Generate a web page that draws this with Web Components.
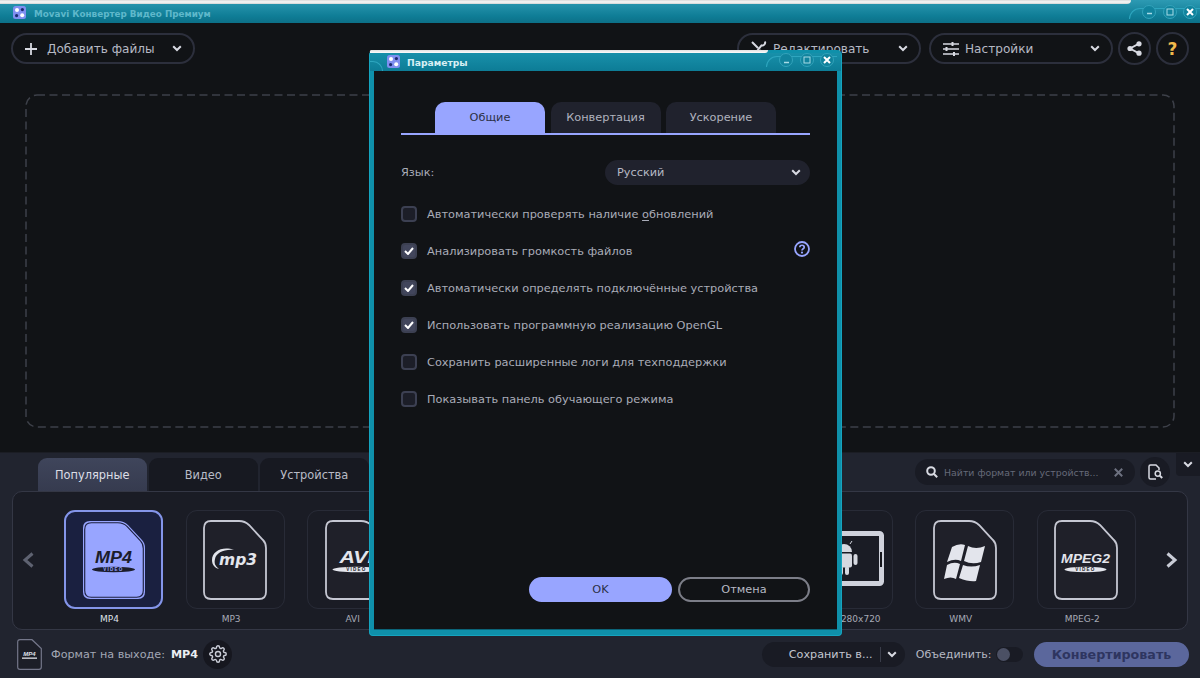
<!DOCTYPE html>
<html lang="ru">
<head>
<meta charset="utf-8">
<title>Movavi Конвертер Видео Премиум</title>
<style>
    html, body { margin: 0; height: 678px; overflow: hidden; background: #111316; }
    body { font-family: "DejaVu Sans", sans-serif; }
</style>
</head>
<body>
<app-shell></app-shell>
<script>
const ICONS = {
    chevron: `<svg width="10" height="7" viewBox="0 0 10 7"><path d="M1.2 1.2 5 5l3.8-3.8" fill="none" stroke="currentColor" stroke-width="2"/></svg>`,
    plus: `<svg width="12" height="12" viewBox="0 0 12 12"><path d="M6 0v12M0 6h12" stroke="#d8dae2" stroke-width="1.800"/></svg>`,
    tools: `<svg width="16" height="16" viewBox="0 0 16 16" fill="none" stroke="#d8dae2" stroke-width="2"><path d="M1 1l6 6M14 .5c.8 2.500-1.500 4.500-3.500 4L3 14M9 9l4 5"/></svg>`,
    sliders: `<svg width="16" height="14" viewBox="0 0 16 14" stroke="#d8dae2" stroke-width="1.600"><path d="M0 2h16M0 7h16M0 12h16"/><path d="M9.500 0v4M3.500 5v4M11 10v4" stroke-width="2"/></svg>`,
    share: `<svg width="15" height="15" viewBox="0 0 15 15"><path d="M12 2.600 3 7.500l9 4.900" fill="none" stroke="#d8dae2" stroke-width="1.800"/><circle cx="12" cy="2.800" r="2.600" fill="#d8dae2"/><circle cx="3" cy="7.500" r="2.600" fill="#d8dae2"/><circle cx="12" cy="12.200" r="2.600" fill="#d8dae2"/></svg>`,
    search: `<svg width="12" height="12" viewBox="0 0 12 12" fill="none" stroke="#d8dae2" stroke-width="2"><circle cx="5" cy="5" r="3.800"/><path d="m8 8 3.200 3.200"/></svg>`,
    close: `<svg width="9" height="9" viewBox="0 0 9 9"><path d="m.8.8 7.400 7.400M8.200.8.8 8.200" stroke="#6d7180" stroke-width="2"/></svg>`,
    docSearch: `<svg width="15" height="16" viewBox="0 0 15 16" fill="none" stroke="#d8dae2" stroke-width="1.500"><path d="M8 15H2.500Q1 15 1 13.500V2.500Q1 1 2.500 1H8l3 3v2"/><circle cx="9.800" cy="9.600" r="2.600"/><path d="m11.800 11.600 2.400 2.400" stroke-width="2"/></svg>`,
    gear: `<svg width="18" height="18" viewBox="0 0 24 24" fill="none" stroke="#c9ccd6" stroke-width="1.900"><circle cx="12" cy="12" r="3.400"/><path d="M19.400 15a1.650 1.650 0 0 0 .33 1.820l.06.06a2 2 0 0 1 0 2.830 2 2 0 0 1-2.830 0l-.06-.06a1.650 1.650 0 0 0-1.820-.33 1.650 1.650 0 0 0-1 1.510V21a2 2 0 0 1-2 2 2 2 0 0 1-2-2v-.09A1.650 1.650 0 0 0 9 19.400a1.650 1.650 0 0 0-1.820.33l-.06.06a2 2 0 0 1-2.830 0 2 2 0 0 1 0-2.830l.06-.06a1.650 1.650 0 0 0 .33-1.820 1.650 1.650 0 0 0-1.510-1H3a2 2 0 0 1-2-2 2 2 0 0 1 2-2h.09A1.650 1.650 0 0 0 4.600 9a1.650 1.650 0 0 0-.33-1.820l-.06-.06a2 2 0 0 1 0-2.830 2 2 0 0 1 2.830 0l.06.06a1.650 1.650 0 0 0 1.820.33H9a1.650 1.650 0 0 0 1-1.510V3a2 2 0 0 1 2-2 2 2 0 0 1 2 2v.09a1.650 1.650 0 0 0 1 1.510 1.650 1.650 0 0 0 1.820-.33l.06-.06a2 2 0 0 1 2.830 0 2 2 0 0 1 0 2.830l-.06.06a1.650 1.650 0 0 0-.33 1.820V9a1.650 1.650 0 0 0 1.510 1H21a2 2 0 0 1 2 2 2 2 0 0 1-2 2h-.09a1.650 1.650 0 0 0-1.510 1z"/></svg>`,
    appLogo: `<svg width="13" height="13" viewBox="0 0 13 13"><rect width="13" height="13" rx="2.500" fill="#7f8ff0"/><circle cx="4" cy="4" r="2" fill="#fff"/><circle cx="9.200" cy="9.200" r="2" fill="#fff"/><circle cx="3.600" cy="9.600" r="1.600" fill="#1c2a70"/><circle cx="9.400" cy="3.600" r="1.600" fill="#1c2a70"/></svg>`,
    help: `<svg width="16" height="16" viewBox="0 0 16 16"><circle cx="8" cy="8" r="7" fill="none" stroke="#98a5ff" stroke-width="1.800"/><path d="M5.800 6.200C5.800 3.600 10.200 3.600 10.200 6.200 10.200 7.800 8 7.800 8 9.600" fill="none" stroke="#98a5ff" stroke-width="1.700"/><circle cx="8" cy="11.600" r="1.100" fill="#98a5ff"/></svg>`,
    arrowLeft: `<svg width="13" height="16" viewBox="0 0 13 16"><path d="M10.500 1.500 3 8l7.500 6.500" fill="none" stroke="currentColor" stroke-width="3"/></svg>`,
    arrowRight: `<svg width="13" height="16" viewBox="0 0 13 16"><path d="M2.500 1.500 10 8l-7.500 6.500" fill="none" stroke="currentColor" stroke-width="3"/></svg>`,
};

function videoLogo(title, size, length, dark, pillW) {
    const ink = dark ? "#1b1d2c" : "#e3e5ec";
    const tiny = dark ? "#98a5ff" : "#1d1e28";
    return `<svg viewBox="0 0 64 80" width="64" height="80" style="position:absolute;left:0;top:0">
        <text x="31.500" y="42.500" text-anchor="middle" textLength="${length}" lengthAdjust="spacingAndGlyphs" font-family="Liberation Sans, sans-serif" font-weight="700" font-style="italic" font-size="${size}" fill="${ink}">${title}</text>
        <ellipse cx="31.500" cy="49.500" rx="${pillW}" ry="2.800" fill="${ink}"/>
        <text x="31.500" y="51.200" text-anchor="middle" font-family="Liberation Sans, sans-serif" font-weight="700" font-size="4.600" letter-spacing="1.200" fill="${tiny}">VIDEO</text>
    </svg>`;
}
const LOGOS = {
    mp3: `<svg viewBox="0 0 64 80" width="64" height="80" style="position:absolute;left:0;top:0">
        <path d="M31 30C20 26 9 31 9 40 9 45 12 48 16 49 12 46 11 43 12 39 13 33 21 29 31 30Z" fill="#e3e5ec"/>
        <text x="35" y="45" text-anchor="middle" textLength="38" lengthAdjust="spacingAndGlyphs" font-family="DejaVu Sans, sans-serif" font-weight="700" font-style="italic" font-size="15" fill="#e3e5ec">mp3</text>
    </svg>`,
    windows: `<svg viewBox="0 0 64 80" width="64" height="80" style="position:absolute;left:0;top:0" fill="#e3e5ec">
        <path d="M19 27Q26 23 32 25L28 41Q22 38 14 42Z"/><path d="M35 26Q43 30 52 26L48 42Q39 45 31 41Z"/>
        <path d="M14 45Q21 41 27 44L23 59Q18 56 11 59Z"/><path d="M30 45Q38 48 47 45L43 61Q36 62 26 58Z"/>
    </svg>`,
    tablet: `<svg viewBox="0 0 84 60" width="84" height="60" style="position:absolute;left:-8px;top:11px">
        <rect x="2.500" y="2.500" width="76" height="50" rx="2" fill="none" stroke="#cfd2dc" stroke-width="5"/>
        <rect x="77" y="21" width="2" height="15" fill="#15161c"/>
        <g fill="#d5d8e0" transform="translate(0 -2)"><path d="M33 23a8 8 0 0 1 16 0z"/><path d="m35 15-2-3M47 15l2-3" stroke="#d5d8e0"/><rect x="33" y="24.500" width="16" height="14" rx="2"/><rect x="27.500" y="25" width="4" height="11" rx="2"/><rect x="50.500" y="25" width="4" height="11" rx="2"/><rect x="36" y="37" width="4" height="9" rx="2"/><rect x="42" y="37" width="4" height="9" rx="2"/></g>
    </svg>`,
};

class TitleBar extends HTMLElement {
    constructor() {
        super();
        const root = this.attachShadow({mode: 'open'});
        root.innerHTML = `
        <style>
            :host { display: block; height: 23px; flex: none; position: relative; background: linear-gradient(#2d9ab3, #0f7d96 70%, #0c7088); color: #5fb8cb; font: 700 8.800px "DejaVu Sans", sans-serif; }
            .strip { height: 4px; margin-right: 69px; background: linear-gradient(#d8d8d8, #f8f8f8 50%, #d0d4d4); border-radius: 0 0 10px 0; }
            .row { display: flex; align-items: center; gap: 8px; height: 19px; padding-left: 13px; }
            .right { margin-left: auto; margin-right: 3px; margin-top: -4px; }
        </style>
        <div class="strip"></div>
        <div class="row"><span>${ICONS.appLogo}</span><span>Movavi Конвертер Видео Премиум</span><win-buttons class="right"></win-buttons></div>`;
    }
}

class WinButtons extends HTMLElement {
    constructor() {
        super();
        const root = this.attachShadow({mode: 'open'});
        root.innerHTML = `
        <style>
            :host { display: flex; gap: 6.500px; position: relative; }
            :host::before { content: ""; position: absolute; left: -13px; right: -3px; top: 3px; height: 10px; border-top: 1px solid #2ea6bf; border-left: 1px solid #2ea6bf; border-top-left-radius: 11px; }
            span { position: relative; box-sizing: border-box; width: 14px; height: 14px; border-radius: 50%; border: 1px solid #33a3bb; background: #11839d; display: grid; place-items: center; color: #a8dbe6; }
            svg { display: block; }
        </style>
        <span><svg width="7" height="7" viewBox="0 0 7 7"><path d="M1 5.500h5" stroke="currentColor" stroke-width="1.500"/></svg></span>
        <span><svg width="8" height="8" viewBox="0 0 8 8"><rect x="1" y="1" width="6" height="6" fill="none" stroke="currentColor"/></svg></span>
        <span><svg width="8" height="8" viewBox="0 0 8 8"><path d="m1 1 6 6M7 1 1 7" stroke="#fff" stroke-width="2"/></svg></span>`;
    }
}

class ToolButton extends HTMLElement {
    constructor() {
        super();
        const root = this.attachShadow({mode: 'open'});
        root.innerHTML = `
        <style>
            :host { display: flex; align-items: center; box-sizing: border-box; height: 31px; border: 2px solid #2c2f3c; border-radius: 16px; padding: 0 11px 0 12px; color: #b6b9c4; font-size: 12.100px; width: 184px; }
            .icon { display: flex; width: 22px; }
            .chev { margin-left: auto; display: flex; color: #d8dae2; }
        </style>
        <span class="icon">${ICONS[this.getAttribute("icon")]}</span><slot></slot><span class="chev">${ICONS.chevron}</span>`;
    }
}

class RoundButton extends HTMLElement {
    constructor() {
        super();
        const root = this.attachShadow({mode: 'open'});
        root.innerHTML = `
        <style>
            :host { display: grid; place-items: center; box-sizing: border-box; width: 33px; height: 33px; margin: -1px 0 0 -3px; border: 2px solid #2c2f3c; border-radius: 50%; color: #f0b94c; font: 700 17px "DejaVu Sans", sans-serif; }
        </style>
        <slot></slot>`;
    }
}

class ToolBar extends HTMLElement {
    constructor() {
        super();
        const root = this.attachShadow({mode: 'open'});
        root.innerHTML = `
        <style>
            :host { display: flex; align-items: flex-start; height: 52px; flex: none; padding: 10px 11px 0; box-sizing: border-box; gap: 8px; background: #111316; }
            .gap { flex: 1; }
        </style>
        <tool-button icon="plus">Добавить файлы</tool-button>
        <div class="gap"></div>
        <tool-button icon="tools">Редактировать</tool-button>
        <tool-button icon="sliders">Настройки</tool-button>
        <round-button>${ICONS.share}</round-button>
        <round-button>?</round-button>`;
    }
}

class DropZone extends HTMLElement {
    constructor() {
        super();
        const root = this.attachShadow({mode: 'open'});
        root.innerHTML = `
        <style>
            :host { display: block; flex: 1; background: #111316; padding: 19px 25px 24px 25px; border-bottom: 1px solid #1b1d24; }
            svg { display: block; width: 100%; height: 100%; }
        </style>
        <svg viewBox="0 0 1150 334" preserveAspectRatio="none"><rect x="1" y="1" width="1148" height="332" rx="11" fill="none" stroke="#3d4049" stroke-width="1.500" stroke-dasharray="8 4.500"/></svg>`;
    }
}

class FormatTab extends HTMLElement {
    constructor() {
        super();
        const root = this.attachShadow({mode: 'open'});
        root.innerHTML = `
        <style>
            :host { display: grid; place-items: center; box-sizing: border-box; width: 108.500px; height: 33px; border-radius: 9px 9px 0 0; background: #171921; color: #b8bbc6; font-size: 11.400px; }
            :host([active]) { background: linear-gradient(#3f455b, #363b4f); color: #dcdee6; }
        </style>
        <slot></slot>`;
    }
}

class FormatCard extends HTMLElement {
    constructor() {
        super();
        const active = this.hasAttribute("active");
        const logo = this.getAttribute("logo") || "";
        const bare = this.hasAttribute("bare");
        const d = "M8 1H36Q42 1 46 5L60 20Q63 23 63 28V72Q63 79 56 79H8Q1 79 1 72V8Q1 1 8 1Z";
        const file = active
            ? `<svg viewBox="0 0 64 80" width="64" height="80"><path d="${d}" fill="#98a5ff"/><path d="${d}" fill="none" stroke="#1c2040" stroke-width="1.200" transform="translate(32 40) scale(.945 .955) translate(-32 -40)"/></svg>`
            : `<svg viewBox="0 0 64 80" width="64" height="80"><path d="${d}" fill="#1f2029" stroke="#c5c7d2" stroke-width="1.800"/></svg>`;
        let art = "";
        if (logo == "mp4") art = videoLogo("MP4", 16, 37, true, 21.5);
        else if (logo == "avi") art = videoLogo("AVI", 16, 34, false, 24);
        else if (logo == "mpeg2") art = videoLogo("MPEG2", 13.5, 49, false, 21);
        else if (LOGOS[logo]) art = LOGOS[logo];
        const root = this.attachShadow({mode: 'open'});
        root.innerHTML = `
        <style>
            :host { display: block; width: 99px; flex: none; position: relative; }
            .tile { box-sizing: border-box; height: 99px; border: 1px solid #282b37; border-radius: 11px; display: grid; place-items: center; }
            :host([active]) .tile { border: 2px solid #8495ea; background: #1a2040; }
            .art { position: relative; width: 64px; height: 80px; }
            svg { display: block; }
            .label { display: block; box-sizing: border-box; padding-right: 8px; text-align: center; white-space: nowrap; font-size: 9px; color: #a7aab6; margin-top: 4px; height: 13px; line-height: 13px; }
            :host([active]) .label { color: #dfe1e8; }
        </style>
        <div class="tile"><div class="art">${bare ? "" : file}${art}</div></div>
        <span class="label"><slot></slot></span>`;
    }
}

class FormatPanel extends HTMLElement {
    constructor() {
        super();
        const root = this.attachShadow({mode: 'open'});
        root.innerHTML = `
        <style>
            :host { display: flex; align-items: flex-start; box-sizing: border-box; height: 139px; margin: 0 12px; padding: 18px 0 0 0; border: 1px solid #343745; border-radius: 10px; background: #1a1c25; }
            .nav { width: 51px; flex: none; height: 99px; box-sizing: border-box; padding-right: 21px; display: grid; place-items: center; color: #5e6271; }
            .nav.next { flex: 1; color: #c9ccd6; padding: 0 0 0 20px; }
            .cards { display: flex; gap: 22.600px; }
        </style>
        <div class="nav">${ICONS.arrowLeft}</div>
        <div class="cards"><slot></slot></div>
        <div class="nav next">${ICONS.arrowRight}</div>`;
    }
}

class OutputBar extends HTMLElement {
    constructor() {
        super();
        const root = this.attachShadow({mode: 'open'});
        root.innerHTML = `
        <style>
            :host { display: flex; align-items: center; flex: 1; padding: 0 11px 0 17px; color: #a3a7b5; font-size: 11.200px; }
            .mini { position: relative; width: 25px; height: 31px; margin-right: 9px; }
            .mini svg { display: block; }
            b { color: #eceef3; margin-left: 6px; }
            .gear { width: 29px; height: 29px; border-radius: 50%; background: #16171f; display: grid; place-items: center; margin-left: 5px; }
            .save { margin-left: auto; display: flex; align-items: center; box-sizing: border-box; width: 143px; height: 25px; border-radius: 13px; background: #191b24; color: #c3c6d0; padding-left: 27px; }
            .save i { display: block; width: 1px; height: 15px; background: #3a3d4a; margin-left: 7px; }
            .save span { margin-left: 6px; display: flex; color: #d8dae2; }
            .merge { margin-left: 11px; color: #b6b9c4; font-size: 11px; }
            .toggle { width: 27px; height: 15px; border-radius: 8px; background: #191b24; margin-left: 4.500px; }
            .toggle::before { content: ""; display: block; width: 13px; height: 13px; margin: 1px; border-radius: 50%; background: #4b5064; }
            .convert { margin-left: 11px; width: 155px; height: 25px; border-radius: 13px; background: #5b679c; color: #2e3560; font-weight: 700; font-size: 12.700px; display: grid; place-items: center; }
        </style>
        <span class="mini"><svg width="25" height="31" viewBox="0 0 25 31"><path d="M3 .7H15L24.300 9.500V28Q24.300 30.300 22 30.300H3Q.7 30.300 .7 28V3Q.7 .7 3 .7Z" fill="#1c1e27" stroke="#74778a" stroke-width="1.200"/><text x="12.500" y="17" text-anchor="middle" font-family="Liberation Sans, sans-serif" font-weight="700" font-style="italic" font-size="6" fill="#dfe1e8">MP4</text><rect x="5" y="18.500" width="15" height="1.300" fill="#dfe1e8"/></svg></span>
        <span>Формат на выходе:</span><b>MP4</b>
        <span class="gear">${ICONS.gear}</span>
        <div class="save">Сохранить в...<i></i><span>${ICONS.chevron}</span></div>
        <span class="merge">Объединить:</span>
        <span class="toggle"></span>
        <div class="convert">Конвертировать</div>`;
    }
}

class BottomPanel extends HTMLElement {
    constructor() {
        super();
        const root = this.attachShadow({mode: 'open'});
        root.innerHTML = `
        <style>
            :host { display: flex; flex-direction: column; height: 225px; flex: none; background: #21242f; }
            .top { display: flex; align-items: flex-start; height: 38px; flex: none; box-sizing: border-box; padding: 5px 0 0 38px; gap: 2.500px; }
            .search { margin-left: auto; display: flex; align-items: center; box-sizing: border-box; width: 220px; height: 26px; margin-top: 1px; border-radius: 13px; background: #191b24; padding: 0 12px 0 11px; color: #666a79; font-size: 9.400px; }
            .search svg { display: block; }
            .search .txt { margin-left: 6px; flex: 1; white-space: nowrap; }
            .find { width: 30px; height: 30px; border-radius: 50%; background: #191b24; display: grid; place-items: center; margin: -1px 0 0 2.500px; }
            .fold { width: 24px; height: 23px; margin: -5px 0 0 3.500px; background: #191b24; border-radius: 0 0 0 4px; color: #d8dae2; display: grid; place-items: center; }
        </style>
        <div class="top">
            <format-tab active>Популярные</format-tab>
            <format-tab>Видео</format-tab>
            <format-tab>Устройства</format-tab>
            <div class="search">${ICONS.search}<span class="txt">Найти формат или устройств...</span>${ICONS.close}</div>
            <div class="find">${ICONS.docSearch}</div>
            <div class="fold">${ICONS.chevron}</div>
        </div>
        <format-panel>
            <format-card active logo="mp4">MP4</format-card>
            <format-card logo="mp3">MP3</format-card>
            <format-card logo="avi">AVI</format-card>
            <format-card bare></format-card>
            <format-card bare></format-card>
            <format-card bare></format-card>
            <format-card bare logo="tablet">Android 1280x720</format-card>
            <format-card logo="windows">WMV</format-card>
            <format-card logo="mpeg2">MPEG-2</format-card>
        </format-panel>
        <output-bar></output-bar>`;
    }
}

class DialogTab extends HTMLElement {
    constructor() {
        super();
        const root = this.attachShadow({mode: 'open'});
        root.innerHTML = `
        <style>
            :host { display: grid; place-items: center; box-sizing: border-box; width: 110px; height: 31px; border-radius: 10px 10px 0 0; background: #20222d; color: #b0b3bf; font-size: 11.300px; }
            :host([active]) { background: #98a5ff; color: #2b3046; }
        </style>
        <slot></slot>`;
    }
}

class CheckRow extends HTMLElement {
    constructor() {
        super();
        const root = this.attachShadow({mode: 'open'});
        root.innerHTML = `
        <style>
            :host { display: flex; align-items: center; height: 37px; color: #a9acb8; font-size: 11.350px; }
            .box { box-sizing: border-box; width: 16px; height: 16px; margin-right: 10px; border: 2px solid #3c4052; border-radius: 4px; background: #1c1e28; display: grid; place-items: center; }
            :host([checked]) .box { background: #42465c; }
            svg { display: none; }
            :host([checked]) svg { display: block; }
            .end { margin-left: auto; display: flex; }
        </style>
        <span class="box"><svg width="10" height="8" viewBox="0 0 10 8"><path d="m1 4 3 3 5-6" fill="none" stroke="#fff" stroke-width="2"/></svg></span>
        <span><slot></slot></span><span class="end"><slot name="end"></slot></span>`;
    }
}

class SettingsDialog extends HTMLElement {
    constructor() {
        super();
        const root = this.attachShadow({mode: 'open'});
        root.innerHTML = `
        <style>
            :host { position: absolute; left: 369px; top: 50px; width: 473px; height: 586px; display: flex; flex-direction: column; box-sizing: border-box; background: #0f90aa; border-radius: 5px 5px 4px 4px; border: 1px solid #15a4bf; border-top: 0; font-family: "DejaVu Sans", sans-serif; }
            .strip { height: 3px; margin-right: 73px; background: linear-gradient(#e0e0e0, #fdfdfd); border-radius: 4px 0 9px 0; }
            .head { position: relative; display: flex; align-items: center; height: 18px; flex: none; padding: 0 7px 0 17px; gap: 7px; background: linear-gradient(#1890aa, #0d7c96); color: #d8eff4; font-weight: 700; font-size: 9.200px; }
            .head::before { content: ""; position: absolute; left: 0; bottom: 0; width: 12px; height: 9px; border-top: 1px solid #2ea6bf; border-right: 1px solid #2ea6bf; border-top-right-radius: 10px; }
            win-buttons { margin: -4px 0 0 auto; }
            .body { flex: 1; margin: 0 4px 5px 4px; background: #111316; display: flex; flex-direction: column; padding: 31px 27px 27px 27px; border-bottom: 1px solid #0b6478; }
            .tabs { display: flex; gap: 5.500px; padding-left: 34px; border-bottom: 2px solid #98a5ff; flex: none; }
            .lang { display: flex; align-items: center; justify-content: space-between; margin-top: 25px; color: #a9acb8; font-size: 11.300px; height: 25px; flex: none; }
            .select { display: flex; align-items: center; box-sizing: border-box; width: 205px; height: 25px; border-radius: 13px; background: #20222d; padding: 0 9px 0 12px; color: #b6b9c4; }
            .select span { margin-left: auto; display: flex; color: #d8dae2; }
            .rows { margin-top: 10px; }
            .actions { margin-top: auto; display: flex; justify-content: flex-end; gap: 6px; font-size: 11.300px; }
            .ok, .cancel { box-sizing: border-box; height: 25px; border-radius: 13px; display: grid; place-items: center; }
            .ok { width: 143px; background: #98a5ff; color: #2b3046; }
            .cancel { width: 132px; border: 2px solid #7c7e88; color: #b6b9c4; }
            u { text-underline-offset: 2px; }
        </style>
        <div class="strip"></div>
        <div class="head"><span>${ICONS.appLogo}</span><span>Параметры</span><win-buttons></win-buttons></div>
        <div class="body">
            <div class="tabs">
                <dialog-tab active>Общие</dialog-tab>
                <dialog-tab>Конвертация</dialog-tab>
                <dialog-tab>Ускорение</dialog-tab>
            </div>
            <div class="lang"><span>Язык:</span><div class="select">Русский<span>${ICONS.chevron}</span></div></div>
            <div class="rows">
                <check-row>Автоматически проверять наличие <u>о</u>бновлений</check-row>
                <check-row checked>Анализировать громкость файлов<span slot="end">${ICONS.help}</span></check-row>
                <check-row checked>Автоматически определять подключённые устройства</check-row>
                <check-row checked>Использовать программную реализацию OpenGL</check-row>
                <check-row>Сохранить расширенные логи для техподдержки</check-row>
                <check-row>Показывать панель обучающего режима</check-row>
            </div>
            <div class="actions"><div class="ok">OK</div><div class="cancel">Отмена</div></div>
        </div>`;
    }
}

class AppShell extends HTMLElement {
    constructor() {
        super();
        const root = this.attachShadow({mode: 'open'});
        root.innerHTML = `
        <style>
            :host { display: flex; flex-direction: column; position: relative; width: 1200px; height: 678px; overflow: hidden; }
        </style>
        <title-bar></title-bar>
        <tool-bar></tool-bar>
        <drop-zone></drop-zone>
        <bottom-panel></bottom-panel>
        <settings-dialog></settings-dialog>`;
    }
}

customElements.define("win-buttons", WinButtons);
customElements.define("title-bar", TitleBar);
customElements.define("tool-button", ToolButton);
customElements.define("round-button", RoundButton);
customElements.define("tool-bar", ToolBar);
customElements.define("drop-zone", DropZone);
customElements.define("format-tab", FormatTab);
customElements.define("format-card", FormatCard);
customElements.define("format-panel", FormatPanel);
customElements.define("output-bar", OutputBar);
customElements.define("bottom-panel", BottomPanel);
customElements.define("dialog-tab", DialogTab);
customElements.define("check-row", CheckRow);
customElements.define("settings-dialog", SettingsDialog);
customElements.define("app-shell", AppShell);
</script>
</body>
</html>
